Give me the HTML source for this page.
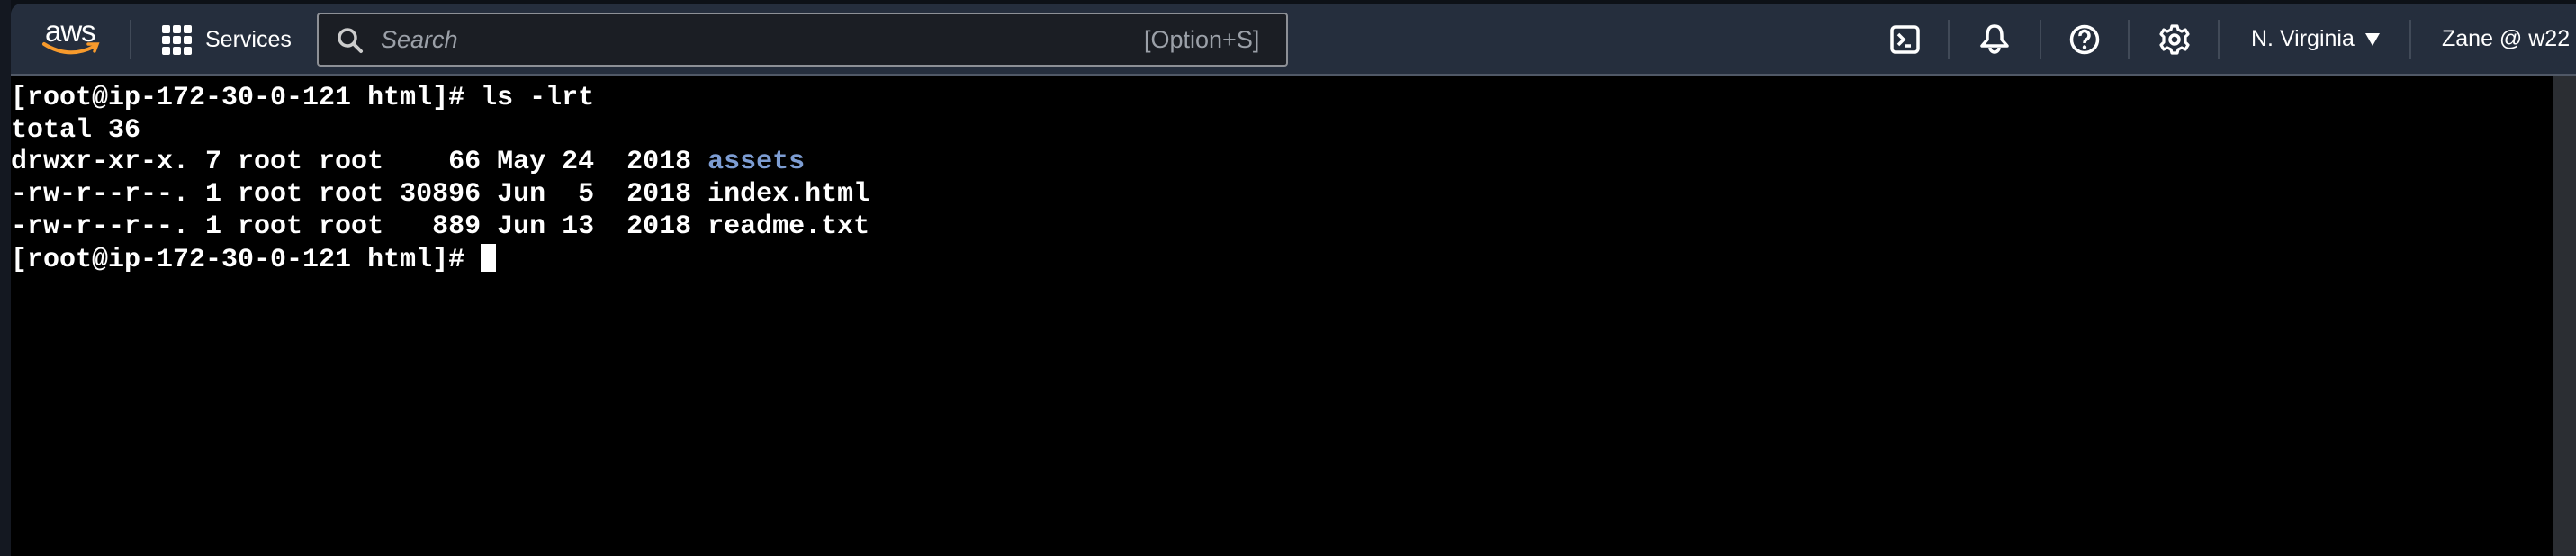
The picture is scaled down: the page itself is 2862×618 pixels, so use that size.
<!DOCTYPE html>
<html><head><meta charset="utf-8"><style>
*{margin:0;padding:0;box-sizing:border-box}
body{width:2862px;height:618px;overflow:hidden;background:#0d1117;position:relative;font-family:"Liberation Sans",sans-serif}
#left{position:absolute;left:0;top:0;width:12px;height:618px;background:#141821}
#nav{position:absolute;left:12px;top:4px;width:2850px;height:78px;background:#252e3d;border-top-left-radius:12px}
#navline{position:absolute;left:12px;top:82px;width:2850px;height:3px;background:#505866}
#term{position:absolute;left:12px;top:85px;width:2824px;height:533px;background:#000}
#sb{position:absolute;left:2836px;top:85px;width:26px;height:533px;background:#2b2e33}
.sep{position:absolute;top:22px;width:2px;height:44px;background:#414a58}
.t{position:absolute;color:#fff;font-size:26px;line-height:1;white-space:nowrap}
pre{position:absolute;left:12px;top:92px;font-family:"Liberation Mono",monospace;font-size:30px;line-height:35.7px;color:#fff;font-weight:bold;letter-spacing:0}
.b{color:#7d9dd3}
.cur{display:inline-block;width:17px;height:31px;background:#fff;vertical-align:-6px}
svg{position:absolute}
</style></head><body>
<div id="left"></div>
<div id="nav"></div>
<div id="navline"></div>
<div id="term"></div>
<div id="sb"></div>

<div class="t" style="left:50px;top:18px;font-size:33px;letter-spacing:-1px">aws</div>
<svg style="left:46px;top:46px" width="66" height="18" viewBox="0 0 66 18"><path d="M3 3 Q30 20 58 6" stroke="#f79a2c" stroke-width="4" fill="none" stroke-linecap="round"/><path d="M52 3 L62 3 L59 11" stroke="#f79a2c" stroke-width="3.5" fill="none" stroke-linecap="round"/></svg>
<div class="sep" style="left:144px"></div>
<svg style="left:180px;top:28px" width="33" height="33" viewBox="0 0 33 33" fill="#fff">
<rect x="0" y="0" width="9" height="9" rx="2"/><rect x="12" y="0" width="9" height="9" rx="2"/><rect x="24" y="0" width="9" height="9" rx="2"/>
<rect x="0" y="12" width="9" height="9" rx="2"/><rect x="12" y="12" width="9" height="9" rx="2"/><rect x="24" y="12" width="9" height="9" rx="2"/>
<rect x="0" y="24" width="9" height="9" rx="2"/><rect x="12" y="24" width="9" height="9" rx="2"/><rect x="24" y="24" width="9" height="9" rx="2"/></svg>
<div class="t" style="left:228px;top:32px;font-size:25px">Services</div>

<div style="position:absolute;left:352px;top:14px;width:1079px;height:60px;background:#1b1e24;border:2px solid #8d9096;border-radius:4px"></div>
<svg style="left:374px;top:30px" width="30" height="30" viewBox="0 0 30 30"><circle cx="12" cy="12" r="9" stroke="#ccc" stroke-width="3.5" fill="none"/><path d="M19 19 L27 27" stroke="#ccc" stroke-width="4" stroke-linecap="round"/></svg>
<div class="t" style="left:423px;top:31px;color:#9ba0a8;font-style:italic;font-size:27px">Search</div>
<div class="t" style="left:1271px;top:31px;color:#9ba0a8;font-size:27px">[Option+S]</div>

<svg style="left:2100px;top:28px" width="33" height="32" viewBox="0 0 33 32"><rect x="2" y="2" width="29" height="28" rx="4" stroke="#fff" stroke-width="3.5" fill="none"/><path d="M9 10 L15 16 L9 22" stroke="#fff" stroke-width="3.5" fill="none"/><path d="M17 23 L23 23" stroke="#fff" stroke-width="3.5"/></svg>
<div class="sep" style="left:2164px"></div>
<svg style="left:2199px;top:26px" width="34" height="36" viewBox="0 0 34 36"><path d="M17 3 C10 3 9 9 9 14 L9 18 L3 25 L31 25 L25 18 L25 14 C25 9 24 3 17 3 Z" stroke="#fff" stroke-width="3.5" fill="none" stroke-linejoin="round"/><path d="M12 27 A5 5 0 0 0 22 27" stroke="#fff" stroke-width="3.5" fill="none"/></svg>
<div class="sep" style="left:2266px"></div>
<svg style="left:2299px;top:27px" width="34" height="34" viewBox="0 0 34 34"><circle cx="17" cy="17" r="14.5" stroke="#fff" stroke-width="3.5" fill="none"/><path d="M12 13 A5 5 0 1 1 19 17 C17.5 18 17 19 17 21" stroke="#fff" stroke-width="3.5" fill="none"/><circle cx="17" cy="25.5" r="2.2" fill="#fff"/></svg>
<div class="sep" style="left:2364px"></div>
<svg style="left:2399px;top:27px" width="34" height="34" viewBox="0 0 34 34"><path d="M14 2 L20 2 L21 6 L25 8 L29 6 L32 11 L29 14 L29 20 L32 23 L29 28 L25 26 L21 28 L20 32 L14 32 L13 28 L9 26 L5 28 L2 23 L5 20 L5 14 L2 11 L5 6 L9 8 L13 6 Z" stroke="#fff" stroke-width="3.2" fill="none" stroke-linejoin="round"/><circle cx="17" cy="17" r="5" stroke="#fff" stroke-width="3.5" fill="none"/></svg>
<div class="sep" style="left:2464px"></div>
<div class="t" style="left:2501px;top:31px;font-size:25px">N. Virginia</div>
<svg style="left:2627px;top:36px" width="18" height="16" viewBox="0 0 18 16"><path d="M1 1 L17 1 L9 15 Z" fill="#fff"/></svg>
<div class="sep" style="left:2677px"></div>
<div class="t" style="left:2713px;top:31px;font-size:25px">Zane @ w22</div>

<pre>[root@ip-172-30-0-121 html]# ls -lrt
total 36
drwxr-xr-x. 7 root root    66 May 24  2018 <span class="b">assets</span>
-rw-r--r--. 1 root root 30896 Jun  5  2018 index.html
-rw-r--r--. 1 root root   889 Jun 13  2018 readme.txt
[root@ip-172-30-0-121 html]# <span class="cur"></span></pre>
</body></html>
